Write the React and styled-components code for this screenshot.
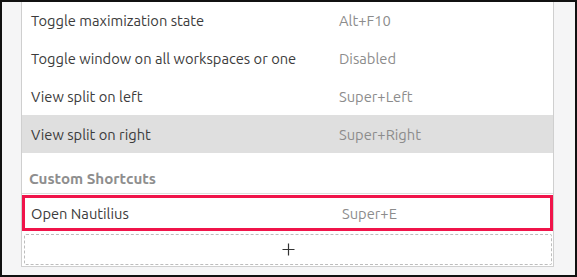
import React from "react";
import styled, { createGlobalStyle } from "styled-components";

const GlobalStyle = createGlobalStyle`
  html, body {
    margin: 0;
    padding: 0;
    background: #000;
  }
  body {
    font-family: Ubuntu, "Noto Sans", "Open Sans", sans-serif;
  }
`;

const Frame = styled.div`
  box-sizing: border-box;
  width: 577px;
  height: 277px;
  border: 2px solid #111;
  background: #f5f5f6;
  padding: 0 0 0 19px;
  overflow: hidden;
`;

const Panel = styled.div`
  box-sizing: border-box;
  width: 533px;
  background: #fff;
  border: 1px solid #cfcfcf;
  border-top: none;
  display: flex;
  flex-direction: column;
`;

const Row = styled.div`
  display: grid;
  grid-template-columns: 308px 1fr;
  align-items: center;
  height: ${p => p.h || 38}px;
  padding-left: 9px;
  background: ${p => (p.active ? "#dfdfdf" : "#fff")};
  font-size: 14.7px;
  color: #3c3c3c;
`;

const Keys = styled.span`
  color: #8c8c8c;
`;

const Heading = styled.div`
  height: 41px;
  box-sizing: border-box;
  padding: 17px 0 0 7px;
  font-size: 15.2px;
  font-weight: bold;
  color: #8e8e8e;
  border-bottom: 1px solid #dcdcdc;
`;

const CustomRow = styled(Row)`
  box-sizing: border-box;
  margin-top: 1px;
  height: 36px;
  border: 3px solid #f0144a;
  padding-left: 6px;
  grid-template-columns: 311px 1fr;
`;

const AddButton = styled.div`
  box-sizing: border-box;
  margin: 3px 1px 1px 2px;
  height: 31px;
  border: 1px dashed #bdbdbd;
  border-radius: 2px;
  display: flex;
  align-items: center;
  justify-content: center;
  color: #333;
  svg {
    width: 13px;
    height: 13px;
  }
`;

const shortcuts = [
  { name: "Toggle maximization state", keys: "Alt+F10", h: 37 },
  { name: "Toggle window on all workspaces or one", keys: "Disabled" },
  { name: "View split on left", keys: "Super+Left" },
  { name: "View split on right", keys: "Super+Right", active: true },
];

export default function App() {
  return (
    <Frame>
      <GlobalStyle />
      <Panel>
        {shortcuts.map(s => (
          <Row key={s.name} h={s.h} active={s.active}>
            <span>{s.name}</span>
            <Keys>{s.keys}</Keys>
          </Row>
        ))}
        <Heading>Custom Shortcuts</Heading>
        <CustomRow>
          <span>Open Nautilius</span>
          <Keys>Super+E</Keys>
        </CustomRow>
        <AddButton>
          <svg viewBox="0 0 13 13">
            <path d="M6.5 0.5v12M0.5 6.5h12" stroke="#333" strokeWidth="1.2" fill="none" />
          </svg>
        </AddButton>
      </Panel>
    </Frame>
  );
}
